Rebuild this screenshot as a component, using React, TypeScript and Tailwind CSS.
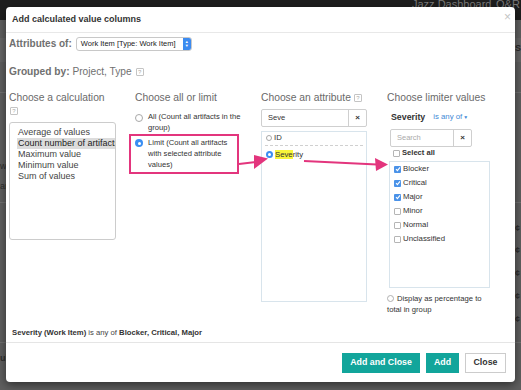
import React from "react";

const font = "font-['Liberation_Sans',Arial,sans-serif]";

function Help() {
  return (
    <span className="inline-flex h-[8px] w-[8px] items-center justify-center rounded-[1px] border border-[#c4c4c4] text-[6px] leading-none text-[#aaa]">
      ?
    </span>
  );
}

function Radio({ on, size = 8 }: { on?: boolean; size?: number }) {
  return (
    <span
      style={{ width: size, height: size }}
      className={
        on
          ? "flex shrink-0 items-center justify-center rounded-full bg-[#3a8ef2]"
          : "flex shrink-0 rounded-full border border-[#a8a8a8] bg-white"
      }
    >
      {on && <span className="h-[3px] w-[3px] rounded-full bg-white" />}
    </span>
  );
}

function Check({ on }: { on?: boolean }) {
  return on ? (
    <span className="flex h-[7px] w-[7px] shrink-0 items-center justify-center rounded-[1px] bg-[#4a92e8]">
      <svg width="6" height="6" viewBox="0 0 6 6">
        <path d="M1 3.2 L2.4 4.6 L5 1.4" stroke="white" strokeWidth="1.1" fill="none" />
      </svg>
    </span>
  ) : (
    <span className="inline-block h-[7px] w-[7px] shrink-0 rounded-[1px] border border-[#b5b5b5] bg-white" />
  );
}

function SearchBox({ value, placeholder, w }: { value?: string; placeholder?: string; w: string }) {
  return (
    <div className={`flex h-[18px] ${w} rounded-[2px] border border-[#cfcfcf] bg-white`}>
      <div className={`flex flex-1 items-center pl-[6px] text-[7.5px] ${value ? "text-[#333]" : "text-[#aaa]"}`}>
        {value || placeholder}
      </div>
      <div className="flex w-[18px] items-center justify-center border-l border-[#cfcfcf] text-[8px] font-bold text-[#333]">
        ×
      </div>
    </div>
  );
}

const calcs = ["Average of values", "Count number of artifacts", "Maximum value", "Minimum value", "Sum of values"];
const limiters: [string, boolean][] = [
  ["Blocker", true],
  ["Critical", true],
  ["Major", true],
  ["Minor", false],
  ["Normal", false],
  ["Unclassified", false],
];

export default function App() {
  return (
    <div className={`relative h-[390px] w-[521px] overflow-hidden bg-[#5f5f5f] ${font}`}>
      {/* page behind the backdrop */}
      <div className="absolute inset-x-0 top-0 h-[20px] bg-[#1e1e1e]">
        <span className="absolute left-[412px] top-[-4px] text-[11px] text-[#7a7a7a]">Jazz Dashboard</span>
        <span className="absolute left-[496px] top-[-4px] text-[11px] text-[#7a7a7a]">Q&amp;R</span>
      </div>
      <div className="absolute left-0 top-[38px] h-[24px] w-full bg-[#666666]" />
      <span className="absolute left-[515px] top-[42px] text-[9px] font-bold text-[#2a2a2a]">S</span>
      <div className="absolute left-0 top-[92px] h-px w-full bg-[#717171]" />
      <span className="absolute left-0 top-[160px] text-[9px] text-[#2e2e2e]">w</span>
      <span className="absolute left-0 top-[180px] text-[9px] text-[#2e2e2e]">ar</span>
      <div className="absolute left-0 top-[202px] h-px w-full bg-[#717171]" />
      {[222, 244, 267, 290, 313].map((t) => (
        <span key={t} className="absolute left-[515px] text-[9px] font-bold text-[#2e2e2e]" style={{ top: t }}>
          ¢
        </span>
      ))}
      <div className="absolute left-0 top-[342px] h-px w-full bg-[#717171]" />
      <span className="absolute left-0 top-[352px] text-[9px] font-bold text-[#2e2e2e]">ul</span>

      {/* modal */}
      <div className="relative ml-[6px] mt-[7px] flex h-[375px] w-[509px] flex-col rounded-[4px] bg-white shadow-[0_3px_10px_rgba(0,0,0,0.5)]">
        <div className="flex h-[26px] items-center justify-between border-b border-[#e8e8e8] pl-[6px] pr-[4px]">
          <span className="mt-[1px] text-[9px] font-bold text-[#333]">Add calculated value columns</span>
          <span className="-mt-[6px] text-[12px] leading-none text-[#c4c4c4]">×</span>
        </div>

        <div className="flex flex-1 flex-col px-[3px] pt-[3px]">
          <div className="flex items-center gap-[4px]">
            <span className="text-[10px] font-bold text-[#707070]">Attributes of:</span>
            <div className="flex h-[14px] w-[116px] items-center justify-between rounded-[3px] border border-[#c8c8c8] bg-white pl-[4px]">
              <span className="text-[7.5px] text-[#222]">Work Item [Type: Work Item]</span>
              <span className="flex h-[12px] w-[8px] flex-col items-center justify-center rounded-r-[2px] bg-[#3c8bf0] text-[4px] leading-[4px] text-white">
                <span>▲</span>
                <span>▼</span>
              </span>
            </div>
          </div>

          <div className="mt-[15px] flex items-center gap-[4px] text-[10.2px] leading-[12px] text-[#707070]">
            <span>
              <b>Grouped by:</b> Project, Type
            </span>
            <Help />
          </div>

          <div className="mt-[14px] grid grid-cols-[126px_126px_126px_125px] text-[10.3px] leading-[12px]">
            {/* column 1 */}
            <div className="flex flex-col">
              <span className="text-[#6a6a6a]">Choose a calculation</span>
              <span className="ml-[1px] mt-[3px] flex">
                <Help />
              </span>
              <div className="mt-[7px] h-[118px] w-[107px] overflow-hidden whitespace-nowrap rounded-[3px] border border-[#cccccc] pl-[7px] pt-[4px] text-[9px] leading-[11px] text-[#444]">
                {calcs.map((c, i) => (
                  <div key={c} className={i === 1 ? "bg-[#dcdcdc] pl-[1px] text-[#222]" : "pl-[1px]"}>
                    {c}
                  </div>
                ))}
              </div>
            </div>

            {/* column 2 */}
            <div className="flex flex-col">
              <span className="text-[#6a6a6a]">Choose all or limit</span>
              <div className="mt-[7px] flex gap-[5px] text-[7.6px] leading-[11px] text-[#333]">
                <span className="mt-[3px]">
                  <Radio />
                </span>
                <span>
                  All (Count all artifacts in the
                  <br />
                  group)
                </span>
              </div>
              <div className="-ml-[6px] mt-[1px] flex w-[110px] gap-[5px] border-2 border-[#e3357d] pb-[2px] pl-[4px] pt-[1px] text-[7.6px] leading-[11px] text-[#333]">
                <span className="mt-[2px]">
                  <Radio on />
                </span>
                <span>
                  Limit (Count all artifacts
                  <br />
                  with selected attribute
                  <br />
                  values)
                </span>
              </div>
            </div>

            {/* column 3 */}
            <div className="flex flex-col">
              <span className="flex items-center gap-[3px] text-[#6a6a6a]">
                Choose an attribute <Help />
              </span>
              <div className="mt-[5px]">
                <SearchBox value="Seve" w="w-[106px]" />
              </div>
              <div className="mt-[4px] h-[171px] w-[106px] border border-[#d8e4ec] text-[7.75px] leading-[11px] text-[#333]">
                <div className="flex items-center gap-[2px] pl-[4px]">
                  <Radio size={6} />
                  <span>ID</span>
                </div>
                <div className="mx-[3px] mt-[2px] border-t border-dashed border-[#d0d0d0]" />
                <div className="mt-[3px] flex items-center gap-[2px] pl-[4px]">
                  <Radio on size={7} />
                  <span>
                    <span className="bg-[#f7f53a]">Seve</span>rity
                  </span>
                </div>
              </div>
            </div>

            {/* column 4 */}
            <div className="flex flex-col">
              <span className="text-[#6a6a6a]">Choose limiter values</span>
              <div className="mt-[7px] flex items-center gap-[8px] pl-[4px]">
                <span className="text-[8.8px] font-bold text-[#333]">Severity</span>
                <span className="flex items-center gap-[1px] text-[7.8px] text-[#3f8ad6]">
                  is any of <span className="text-[5px]">▼</span>
                </span>
              </div>
              <div className="ml-[3px] mt-[6px]">
                <SearchBox placeholder="Search" w="w-[82px]" />
              </div>
              <div className="ml-[6px] mt-[1px] flex h-[10px] items-center gap-[2px] text-[7.6px] font-bold text-[#333]">
                <Check />
                <span>Select all</span>
              </div>
              <div className="ml-[2px] mt-[3px] h-[127px] w-[101px] border border-[#d8e4ec] pl-[4px] text-[7.8px] text-[#333]">
                {limiters.map(([l, on]) => (
                  <div key={l} className="flex h-[14px] items-center gap-[2px]">
                    <Check on={on} />
                    <span>{l}</span>
                  </div>
                ))}
              </div>
              <div className="mt-[5px] text-[7.7px] leading-[11px] text-[#333]">
                <span className="mr-[3px] inline-block h-[7px] w-[7px] rounded-full border border-[#b0b0b0] align-[-1px]" />
                Display as percentage to
                <br />
                total in group
              </div>
            </div>
          </div>

          <div className="mt-auto pb-[4px] pl-[3px] text-[7.7px] leading-[11px] text-[#444]">
            <b className="text-[#333]">Severity (Work Item)</b> is any of <b className="text-[#333]">Blocker, Critical, Major</b>
          </div>
        </div>

        <div className="flex h-[40px] items-start justify-end gap-[6px] border-t border-[#e5e5e5] pr-[9px] pt-[10px]">
          <button className="h-[20px] w-[78px] bg-[#12a59b] text-[8.8px] font-bold text-white">Add and Close</button>
          <button className="h-[20px] w-[33px] bg-[#12a59b] text-[8.8px] font-bold text-white">Add</button>
          <button className="h-[20px] w-[41px] border border-[#cccccc] bg-white text-[8.8px] font-bold text-[#333]">Close</button>
        </div>

        {/* annotation arrows */}
        <svg className="pointer-events-none absolute left-[-6px] top-[-7px]" width="521" height="390">
          <line x1="239" y1="164" x2="256" y2="162" stroke="#e3357d" strokeWidth="2" />
          <polygon points="254,155 268,158.5 254,169" fill="#e3357d" />
          <line x1="304" y1="161" x2="377" y2="164.5" stroke="#e3357d" strokeWidth="2" />
          <polygon points="375,158 388,164.5 376,171" fill="#e3357d" />
        </svg>
      </div>
    </div>
  );
}
